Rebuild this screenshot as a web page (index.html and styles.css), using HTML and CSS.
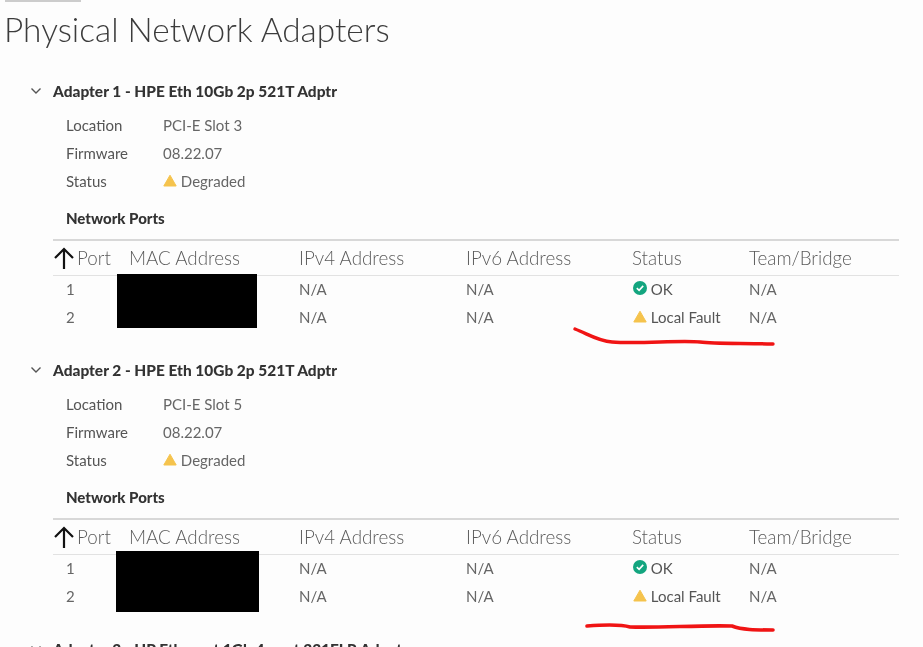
FILE: index.html
```html
<!DOCTYPE html>
<html>
<head>
	<meta charset="utf-8">
	<title>Physical Network Adapters</title>
	<link rel="stylesheet" href="styles.css">
</head>
<body>
	<div class="page">
		<div class="crumb"></div>
		<h1 class="title">Physical Network Adapters</h1>

		<section class="adapter">
			<h2 class="adapter_head">
				<svg class="chevron" width="12" height="8" viewBox="0 0 12 8"><path d="M1.5 1.5 L6 6 L10.5 1.5" fill="none" stroke="#555" stroke-width="1.4"/></svg>
				Adapter 1 - HPE Eth 10Gb 2p 521T Adptr
			</h2>
			<dl class="facts">
				<dt>Location</dt><dd>PCI-E Slot 3</dd>
				<dt>Firmware</dt><dd>08.22.07</dd>
				<dt>Status</dt>
				<dd>
					<svg class="status_icon" width="14" height="13" viewBox="0 0 14 13"><path d="M7 1.2 L13.2 12 L0.8 12 Z" fill="#f5c34d" stroke="#f5c34d" stroke-width="1" stroke-linejoin="round"/></svg>
					Degraded
				</dd>
			</dl>
			<h3 class="ports_head">Network Ports</h3>
			<div class="ports">
				<div class="ports_row ports_header">
					<div class="port_col">
						<svg class="sort_arrow" width="22" height="24" viewBox="0 0 22 24"><path d="M11 23 V3 M2 12 L11 3 L20 12" fill="none" stroke="#111" stroke-width="2.2"/></svg>
						Port
					</div>
					<div>MAC Address</div>
					<div>IPv4 Address</div>
					<div>IPv6 Address</div>
					<div>Status</div>
					<div>Team/Bridge</div>
				</div>
				<div class="ports_row">
					<div class="port_num">1</div>
					<div></div>
					<div>N/A</div>
					<div>N/A</div>
					<div class="status_cell">
						<svg class="status_icon" width="14" height="14" viewBox="0 0 14 14"><circle cx="7" cy="7" r="7" fill="#13a57f"/><path d="M3.8 7.2 L6.1 9.4 L10.2 4.9" fill="none" stroke="#fff" stroke-width="1.6"/></svg>
						OK
					</div>
					<div>N/A</div>
				</div>
				<div class="ports_row">
					<div class="port_num">2</div>
					<div></div>
					<div>N/A</div>
					<div>N/A</div>
					<div class="status_cell">
						<svg class="status_icon" width="14" height="13" viewBox="0 0 14 13"><path d="M7 1.2 L13.2 12 L0.8 12 Z" fill="#f5c34d" stroke="#f5c34d" stroke-width="1" stroke-linejoin="round"/></svg>
						Local Fault
					</div>
					<div>N/A</div>
				</div>
				<div class="redact redact_one"></div>
			</div>
		</section>

		<section class="adapter">
			<h2 class="adapter_head">
				<svg class="chevron" width="12" height="8" viewBox="0 0 12 8"><path d="M1.5 1.5 L6 6 L10.5 1.5" fill="none" stroke="#555" stroke-width="1.4"/></svg>
				Adapter 2 - HPE Eth 10Gb 2p 521T Adptr
			</h2>
			<dl class="facts">
				<dt>Location</dt><dd>PCI-E Slot 5</dd>
				<dt>Firmware</dt><dd>08.22.07</dd>
				<dt>Status</dt>
				<dd>
					<svg class="status_icon" width="14" height="13" viewBox="0 0 14 13"><path d="M7 1.2 L13.2 12 L0.8 12 Z" fill="#f5c34d" stroke="#f5c34d" stroke-width="1" stroke-linejoin="round"/></svg>
					Degraded
				</dd>
			</dl>
			<h3 class="ports_head">Network Ports</h3>
			<div class="ports">
				<div class="ports_row ports_header">
					<div class="port_col">
						<svg class="sort_arrow" width="22" height="24" viewBox="0 0 22 24"><path d="M11 23 V3 M2 12 L11 3 L20 12" fill="none" stroke="#111" stroke-width="2.2"/></svg>
						Port
					</div>
					<div>MAC Address</div>
					<div>IPv4 Address</div>
					<div>IPv6 Address</div>
					<div>Status</div>
					<div>Team/Bridge</div>
				</div>
				<div class="ports_row">
					<div class="port_num">1</div>
					<div></div>
					<div>N/A</div>
					<div>N/A</div>
					<div class="status_cell">
						<svg class="status_icon" width="14" height="14" viewBox="0 0 14 14"><circle cx="7" cy="7" r="7" fill="#13a57f"/><path d="M3.8 7.2 L6.1 9.4 L10.2 4.9" fill="none" stroke="#fff" stroke-width="1.6"/></svg>
						OK
					</div>
					<div>N/A</div>
				</div>
				<div class="ports_row">
					<div class="port_num">2</div>
					<div></div>
					<div>N/A</div>
					<div>N/A</div>
					<div class="status_cell">
						<svg class="status_icon" width="14" height="13" viewBox="0 0 14 13"><path d="M7 1.2 L13.2 12 L0.8 12 Z" fill="#f5c34d" stroke="#f5c34d" stroke-width="1" stroke-linejoin="round"/></svg>
						Local Fault
					</div>
					<div>N/A</div>
				</div>
				<div class="redact redact_two"></div>
			</div>
		</section>

		<section class="adapter">
			<h2 class="adapter_head">
				<svg class="chevron" width="12" height="8" viewBox="0 0 12 8"><path d="M1.5 1.5 L6 6 L10.5 1.5" fill="none" stroke="#555" stroke-width="1.4"/></svg>
				Adapter 3 - HP Ethernet 1Gb 4-port 331FLR Adapter
			</h2>
		</section>

		<!-- hand drawn marks on top of the screenshot -->
		<svg class="scribble" width="923" height="647" viewBox="0 0 923 647">
			<path d="M575 329 C588 334 598 341 612 342 C640 344 680 340 700 342 C715 344 745 343 773 344" fill="none" stroke="#f01414" stroke-width="3.4" stroke-linecap="round"/>
			<path d="M587 626 C600 625 620 624 630 627 C660 628 700 625 732 626 C742 630 755 630 773 630" fill="none" stroke="#f01414" stroke-width="3.6" stroke-linecap="round"/>
		</svg>
	</div>
</body>
</html>
```

FILE: styles.css
```css
html, body
{
	margin: 0;
	height: 100%;
	overflow: hidden;
	background-color: #fdfdfd;
}
.page
{
	position: relative;
	height: 647px;
	overflow: hidden;
	padding-left: 5px;
	font-family: "Lato", "Liberation Sans", sans-serif;
	font-size: 15px;
	color: #555;
	filter: blur(0.5px);
	box-sizing: border-box;
}
.crumb
{
	width: 76px;
	height: 2px;
	background-color: #ccc;
}
.title
{
	margin: 8px 0 0 -1px;
	height: 40px;
	line-height: 39px;
	font-size: 33.4px;
	font-weight: 300;
	color: #3c3c3c;
}
.adapter
{
	height: 279px;
	padding-left: 48px;
	box-sizing: border-box;
	padding-right: 24px;
}
.adapter_head
{
	display: flex;
	align-items: center;
	margin: 0;
	padding-top: 31px;
	height: 20px;
	line-height: 20px;
	font-size: 15.45px;
	font-weight: 900;
	color: #333;
	white-space: nowrap;
}
.adapter_head .chevron
{
	margin-left: -23px;
	margin-right: 11px;
}
.facts
{
	display: grid;
	grid-template-columns: 97px 1fr;
	grid-auto-rows: 28px;
	margin: 11px 0 0 13px;
	line-height: 27px;
}
.facts dt, .facts dd
{
	margin: 0;
}
.facts dd
{
	color: #666;
}
.status_icon
{
	vertical-align: 0;
}
.ports_head
{
	margin: 12px 0 0 13px;
	height: 20px;
	line-height: 20px;
	font-size: 15px;
	font-weight: 900;
	color: #333;
}
.ports
{
	position: relative;
	margin-top: 11px;
	border-top: 2px solid #d8d8d8;
}
.ports_row
{
	display: grid;
	grid-template-columns: 76px 170px 167px 166px 117px 1fr;
	height: 28px;
	line-height: 26px;
	color: #666;
}
.ports_header
{
	height: 34px;
	line-height: 34px;
	font-size: 18.8px;
	font-weight: 300;
	color: #5a5a5a;
	border-bottom: 1px solid #e2e2e2;
}
.port_col
{
	display: flex;
	align-items: center;
	gap: 2px;
}
.sort_arrow
{
	flex: none;
}
.port_num
{
	padding-left: 13px;
}
.status_cell
{
	color: #555;
	padding-left: 1px;
}
.redact
{
	position: absolute;
	background-color: #000;
}
.redact_one
{
	left: 64px;
	top: 33px;
	width: 140px;
	height: 54px;
}
.redact_two
{
	left: 63px;
	top: 31px;
	width: 143px;
	height: 61px;
}
.scribble
{
	position: absolute;
	left: 0;
	top: 0;
}
```
